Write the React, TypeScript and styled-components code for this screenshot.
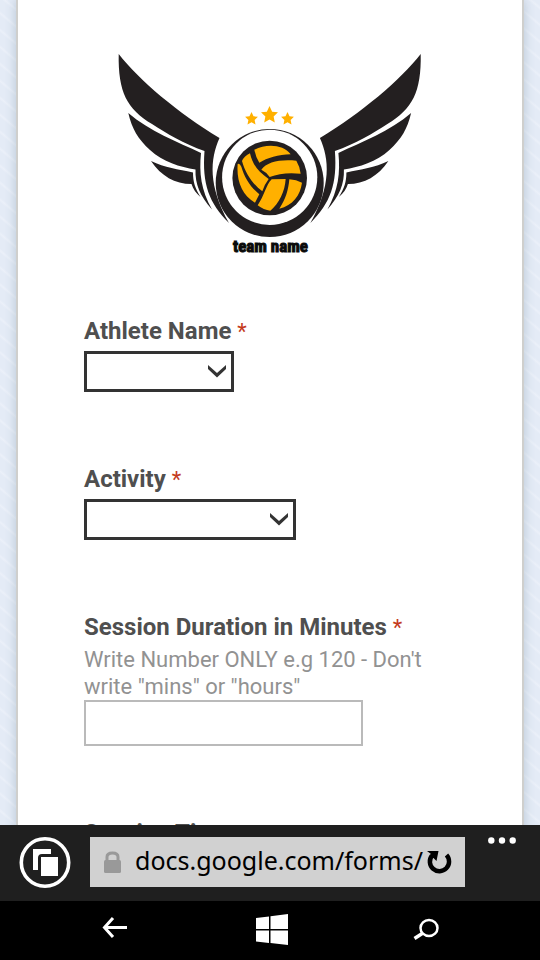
import React from "react";
import styled, { createGlobalStyle } from "styled-components";

const GlobalStyle = createGlobalStyle`
  * { box-sizing: border-box; }
  body { margin: 0; background: #000; font-family: Roboto, sans-serif; }
  button { border: 0; padding: 0; background: none; color: inherit; }
`;

const Phone = styled.div`
  display: flex;
  flex-direction: column;
  height: 100vh;
  overflow: hidden;
`;

const Viewport = styled.div`
  flex: 1;
  min-height: 0;
  overflow: hidden;
  padding: 0 16px;
  background: repeating-linear-gradient(40deg, #e4ebf6 0 9px, #ebf0f9 11px, #e4ebf6 13px);
`;

const Sheet = styled.main`
  min-height: 100%;
  padding: 45px 66px 0;
  background: #fff;
  border: solid #cfcfcd;
  border-width: 0 2px 0;
  box-shadow: 0 0 10px rgba(70, 100, 130, 0.28);
`;

const Emblem = styled.svg`
  display: block;
  width: 320px;
  height: 215px;
  margin: 0 auto 57px;
`;

const TeamName = styled.text`
  font-family: "Liberation Sans Narrow", "Roboto Condensed", "Liberation Sans", sans-serif;
  font-size: 17px;
  font-weight: 700;
  text-anchor: middle;
  fill: #0b0b0b;
  stroke: #0b0b0b;
  stroke-width: 1px;
`;

const Field = styled.div`
  display: flex;
  flex-direction: column;
  align-items: flex-start;
  margin-bottom: 73px;
`;

const Label = styled.label`
  font-size: 24px;
  font-weight: 700;
  line-height: 28px;
  color: #4f4f4f;
`;

const Required = styled.span`
  font-size: 22px;
  font-weight: 400;
  line-height: 1;
  color: #c43b1d;
`;

const Hint = styled.p`
  margin: 5px 0 0;
  font-size: 22px;
  line-height: 27px;
  color: #929292;
`;

const SelectBox = styled.div<{ $width: number }>`
  display: grid;
  align-items: center;
  width: ${(p) => p.$width}px;
  max-width: 100%;
  margin-top: 6px;

  > * { grid-area: 1 / 1; }
  > svg { justify-self: end; margin-right: 8px; pointer-events: none; }
`;

const Select = styled.select`
  appearance: none;
  width: 100%;
  height: 41px;
  border: 3px solid #333;
  border-radius: 0;
  background: #fff;
  font: 22px Roboto, sans-serif;
`;

const TextInput = styled.input`
  width: 279px;
  max-width: 100%;
  height: 46px;
  padding: 0 8px;
  border: 2px solid #bababa;
  font: 22px Roboto, sans-serif;
`;

const BrowserBar = styled.div`
  display: flex;
  flex: none;
  height: 76px;
  padding: 12px 24px 0 19px;
  background: #1f1f1f;
  color: #fff;
`;

const RoundButton = styled.button`
  width: 52px;
  height: 52px;
  margin-right: 19px;
`;

const AddressBox = styled.div`
  display: flex;
  flex: 1;
  min-width: 0;
  align-items: center;
  height: 50px;
  padding: 0 12px 0 13px;
  background: #d1d1d1;
  color: #000;

  svg { display: block; }
`;

const Address = styled.input`
  flex: 1;
  min-width: 0;
  height: 50px;
  margin-left: 13px;
  padding: 0 0 5px;
  border: 0;
  background: none;
  color: #000;
  font: 25px "Noto Sans", "Open Sans", sans-serif;
`;

const MoreButton = styled.button`
  align-self: flex-start;
  width: 28px;
  height: 7px;
  margin-left: 23px;

  svg { display: block; }
`;

const SystemBar = styled.nav`
  display: flex;
  flex: none;
  justify-content: space-between;
  align-items: center;
  height: 59px;
  padding: 0 100px 2px;
  background: #000;
  color: #fff;

  button { height: 34px; }
  svg { display: block; }
`;

const Wing = () => (
  <g fill="#231f20">
    <path d="M118.700 54C139 80 178 113 219.500 138C210 159 208 186 229 223C209 203 202 184 204.500 151C184 144 166 133 152 124C127 109 118 92 118.700 54Z" />
    <path d="M128.300 113C149 131 178 142 201 153C199 173 201 190 212 209.500C200 196 195 184 195.500 169.500C180 167 163 162 150 150C138 139 132 129 128.300 113Z" />
    <path d="M151 161C165 168 178 169 193 172.500C193 182 195 188 200.500 197C196 193 193 189 191.500 184C175 184 161 176 151 161Z" />
  </g>
);

const starPath = "M0-8L2.500-2.700L8-2.200L3.900 1.800L5 7.500L0 4.700L-5 7.500L-3.900 1.800L-8-2.200L-2.500-2.700Z";

const TeamEmblem = () => (
  <Emblem viewBox="110 45 320 215" role="img" aria-label="Team emblem">
    <Wing />
    <g transform="translate(539.400 0) scale(-1 1)">
      <Wing />
    </g>
    <circle cx="269.700" cy="183" r="54" fill="#231f20" />
    <circle cx="269.700" cy="177.300" r="47.600" fill="#fff" />
    <circle cx="269.700" cy="178" r="37.300" fill="#231f20" />
    <g transform="translate(225 130) scale(.33333)" fill="#ffb000">
      <path d="M88 59C125 40 175 43 197 73C160 74 127 84 103 98Q92 80 88 59Z" />
      <path d="M109 119C125 96 165 87 214 92Q224 108 227 131C190 127 160 131 134 141Q124 126 109 119Z" />
      <path d="M51 93Q58 78 75 70C82 102 98 124 131 147Q118 164 112 184C84 163 61 131 51 93Z" />
      <path d="M38 102Q44 99 49 110C59 144 75 169 103 193L90 218C50 196 34 151 38 102Z" />
      <path d="M140 148L182 147C180 184 162 221 136 242Q116 240 98 226C118 197 123 165 140 148Z" />
      <path d="M193 148Q214 149 231 158C226 196 203 226 163 236C182 208 190 180 193 148Z" />
    </g>
    <g fill="#ffb000">
      <path d={starPath} transform="translate(269.500 114.500) scale(1.06)" />
      <path d={starPath} transform="translate(251.500 118.500) scale(.8)" />
      <path d={starPath} transform="translate(287.500 118.500) scale(.8)" />
    </g>
    <TeamName x="270.500" y="252">team name</TeamName>
  </Emblem>
);

const Chevron = () => (
  <svg width="18" height="16" viewBox="0 0 18 16" aria-hidden="true">
    <path d="M0 1L9 9L18 1V5L9 13.500L0 5Z" fill="#333" />
  </svg>
);

type DropdownProps = { id: string; label: string; width: number };

const Dropdown = ({ id, label, width }: DropdownProps) => (
  <Field>
    <Label htmlFor={id}>
      {label} <Required>*</Required>
    </Label>
    <SelectBox $width={width}>
      <Select id={id} required defaultValue="">
        <option value="" />
      </Select>
      <Chevron />
    </SelectBox>
  </Field>
);

export default function App() {
  return (
    <Phone>
      <GlobalStyle />
      <Viewport>
        <Sheet>
          <TeamEmblem />
          <Dropdown id="athlete" label="Athlete Name" width={150} />
          <Dropdown id="activity" label="Activity" width={212} />
          <Field>
            <Label htmlFor="duration">
              Session Duration in Minutes <Required>*</Required>
            </Label>
            <Hint id="duration-hint">Write Number ONLY e.g 120 - Don't write "mins" or "hours"</Hint>
            <TextInput id="duration" type="text" required aria-describedby="duration-hint" />
          </Field>
          <Label as="div">Session Time</Label>
        </Sheet>
      </Viewport>
      <BrowserBar>
        <RoundButton aria-label="Tabs">
          <svg width="52" height="52" viewBox="0 0 52 52" fill="#fff">
            <circle cx="26" cy="25.500" r="23.700" fill="none" stroke="#fff" strokeWidth="3.600" />
            <path d="M14 12H32V17H23Q19 17 19 21V33H14Z" />
            <path d="M22 20H39V39H22Z" />
          </svg>
        </RoundButton>
        <AddressBox>
          <svg width="19" height="22" viewBox="0 0 19 22" aria-hidden="true">
            <path d="M4 10V6Q4 2 9.500 2T15 6V10" fill="none" stroke="#999" strokeWidth="3" />
            <rect x="1" y="9" width="17" height="13" rx="1.500" fill="#999" />
          </svg>
          <Address aria-label="Address" defaultValue="docs.google.com/forms/" />
          <button aria-label="Refresh">
            <svg width="26" height="24" viewBox="0 0 26 24">
              <path d="M5 5.500A9.600 9.600 0 1 0 19.500 5" fill="none" stroke="#000" strokeWidth="4.500" />
              <path d="M0 1H11.500L9.500 11L6.500 8L3 8L4 4Z" />
            </svg>
          </button>
        </AddressBox>
        <MoreButton aria-label="More">
          <svg width="28" height="7" viewBox="0 0 28 7" fill="#fff">
            <circle cx="3.300" cy="3.500" r="3.200" />
            <circle cx="14" cy="3.500" r="3.200" />
            <circle cx="24.700" cy="3.500" r="3.200" />
          </svg>
        </MoreButton>
      </BrowserBar>
      <SystemBar>
        <button aria-label="Back">
          <svg width="30" height="30" viewBox="0 0 30 30">
            <path d="M27 12.500H5M13 3L4.500 12.500L13 22" fill="none" stroke="#fff" strokeWidth="3" />
          </svg>
        </button>
        <button aria-label="Start">
          <svg width="32" height="32" viewBox="0 0 32 32" fill="#fff">
            <path d="M0 4L13 2.500V15H0ZM14.500 2.300L32 0V15H14.500ZM0 16.500H13V29L0 27.500ZM14.500 16.500H32V31L14.500 29Z" />
          </svg>
        </button>
        <button aria-label="Search">
          <svg width="27" height="30" viewBox="0 0 27 30" fill="none" stroke="#fff">
            <ellipse cx="16" cy="13" rx="8.500" ry="8" strokeWidth="2.500" />
            <path d="M10 18L1.500 23.500" strokeWidth="3.500" />
          </svg>
        </button>
      </SystemBar>
    </Phone>
  );
}
